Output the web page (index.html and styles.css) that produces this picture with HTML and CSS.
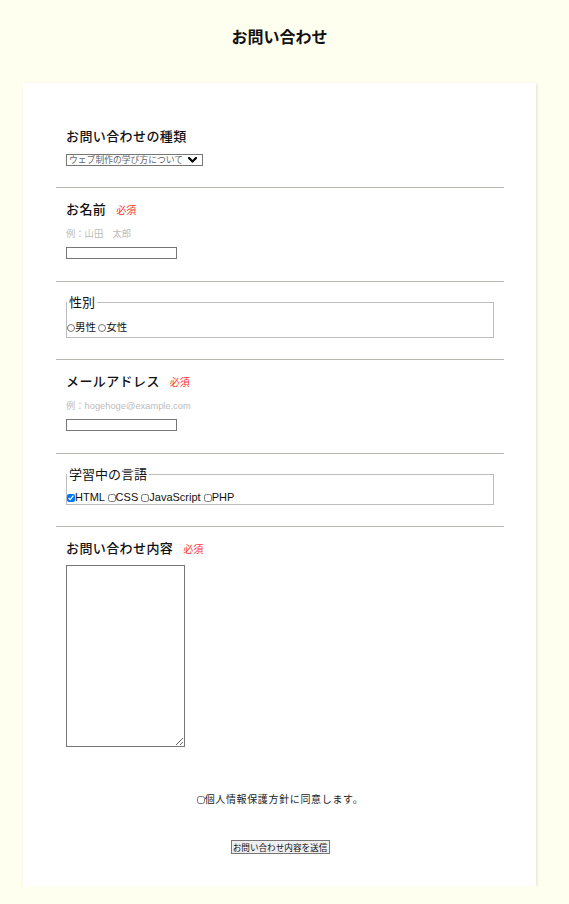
FILE: index.html
```html
<!DOCTYPE html>
<html lang="ja">
<head>
<meta charset="utf-8">
<title>お問い合わせ</title>
<link rel="stylesheet" href="styles.css">
</head>
<body>
<div class="page">
  <h1 class="title">お問い合わせ</h1>
  <main class="card">
    <form class="form">
      <div class="item">
        <p class="label">お問い合わせの種類</p>
        <div class="select-wrap">
          <select class="select">
            <option>ウェブ制作の学び方について</option>
            <option>その他</option>
          </select>
          <svg class="chev" width="9" height="6" viewBox="0 0 9 6"><polyline points="1,1 4.5,4.6 8,1" fill="none" stroke="#000" stroke-width="2.2" stroke-linecap="round" stroke-linejoin="round"/></svg>
        </div>
      </div>

      <div class="item item-input">
        <p class="label">お名前<span class="req">必須</span></p>
        <p class="hint">例：山田　太郎</p>
        <input class="text" type="text">
      </div>

      <div class="item item-fs">
        <fieldset class="fs fs-jp">
          <legend class="legend">性別</legend>
          <div class="choices choices-jp"><label><input class="radio" type="radio" name="sex">男性</label> <label><input class="radio" type="radio" name="sex">女性</label></div>
        </fieldset>
      </div>

      <div class="item item-input">
        <p class="label">メールアドレス<span class="req">必須</span></p>
        <p class="hint">例：hogehoge@example.com</p>
        <input class="text" type="email">
      </div>

      <div class="item item-fs">
        <fieldset class="fs">
          <legend class="legend">学習中の言語</legend>
          <div class="choices choices-en"><label><input class="check" type="checkbox" checked>HTML</label> <label><input class="check" type="checkbox">CSS</label> <label><input class="check" type="checkbox">JavaScript</label> <label><input class="check" type="checkbox">PHP</label></div>
        </fieldset>
      </div>

      <div class="item item-last">
        <p class="label">お問い合わせ内容<span class="req">必須</span></p>
        <textarea class="textarea"></textarea>
      </div>

      <p class="agree"><label><input class="check" type="checkbox">個人情報保護方針に同意します。</label></p>
      <div class="submit-row"><button class="submit" type="submit">お問い合わせ内容を送信</button></div>
    </form>
  </main>
</div>
</body>
</html>
```
FILE: styles.css
```css
html, body {
  margin: 0;
  background: #fffff0;
}
body {
  font-family: "Liberation Sans", "Noto Sans CJK JP", sans-serif;
  color: #111;
}
.page {
  margin-left: 23px;
  width: 513px;
}
.title {
  margin: 0 0 37px;
  padding-top: 26px;
  height: 20px;
  line-height: 20px;
  font-size: 16px;
  font-weight: 700;
  text-align: center;
  font-family: "Noto Sans CJK JP", sans-serif;
}
.card {
  display: block;
  box-sizing: border-box;
  padding: 32px 32px 32px 33px;
  background: #fff;
  box-shadow: 1px 1px 3px rgba(0, 0, 0, 0.12);
}
.item {
  padding: 13px 10px 21px;
  border-bottom: 1px solid #b8b8b0;
}
.item-input {
  padding-bottom: 22px;
}
.item-fs {
  padding-top: 12px;
}
.item-last {
  border-bottom: 0;
  padding-bottom: 0;
}
.label {
  margin: 0;
  height: 16px;
  font-family: "Noto Sans CJK JP", sans-serif;
  font-size: 13px;
  line-height: 16px;
  font-weight: 500;
  letter-spacing: 0.4px;
  color: #111;
}
.req {
  margin-left: 10px;
  font-size: 10px;
  line-height: 10px;
  font-weight: 400;
  letter-spacing: 0;
  color: #f33;
}
.hint {
  margin: 11px 0 0;
  height: 12px;
  font-size: 9.3px;
  line-height: 12px;
  color: #bcbcbc;
}
.text {
  display: block;
  margin: 7px 0 0;
  width: 111px;
  height: 12px;
  box-sizing: border-box;
  border: 1px solid #767676;
  padding: 0;
  background: #fff;
}
.select-wrap {
  position: relative;
  margin-top: 10px;
  width: 137px;
  height: 12px;
}
.select {
  -webkit-appearance: none;
  appearance: none;
  display: block;
  width: 137px;
  height: 12px;
  box-sizing: border-box;
  margin: 0;
  padding: 0 0 0 2px;
  border: 1px solid #767676;
  border-radius: 0;
  background: #fff;
  font-family: "Noto Sans CJK JP", sans-serif;
  font-size: 8.8px;
  line-height: 10px;
  color: #666;
}
.chev {
  position: absolute;
  left: 122px;
  top: 3px;
  pointer-events: none;
}
.fs {
  margin: 0;
  padding: 8px 0 0;
  border: 1px solid #bdbdbd;
  min-width: 0;
}
.fs-jp {
  padding-bottom: 1px;
}
.legend {
  padding: 0 2px;
  font-family: "Noto Sans CJK JP", sans-serif;
  font-size: 13px;
  line-height: 16px;
  color: #111;
}
.choices-jp {
  font-family: "Noto Sans CJK JP", sans-serif;
  font-size: 10.5px;
  line-height: 18px;
  height: 18px;
}
.choices-en {
  font-size: 11px;
  line-height: 14px;
  height: 14px;
}
.radio,
.check {
  width: 8px;
  height: 8px;
  margin: 0;
  vertical-align: -0.5px;
}
.textarea {
  display: block;
  margin-top: 9px;
  width: 119px;
  height: 182px;
  box-sizing: border-box;
  border: 1px solid #767676;
  padding: 2px;
  resize: both;
}
.agree {
  margin: 45px 0 0;
  height: 14px;
  text-align: center;
  font-family: "Noto Sans CJK JP", sans-serif;
  font-size: 10px;
  line-height: 14px;
  letter-spacing: 0.65px;
  color: #222;
}
.submit-row {
  margin-top: 34px;
  height: 14px;
  text-align: center;
  line-height: 14px;
}
.submit {
  display: inline-block;
  vertical-align: top;
  width: 99px;
  height: 14px;
  box-sizing: border-box;
  margin: 0;
  padding: 0;
  border: 1px solid #767676;
  border-radius: 0;
  background: #efefef;
  font-family: "Noto Sans CJK JP", sans-serif;
  font-size: 8.6px;
  line-height: 12px;
  white-space: nowrap;
  overflow: hidden;
  color: #111;
}
```
